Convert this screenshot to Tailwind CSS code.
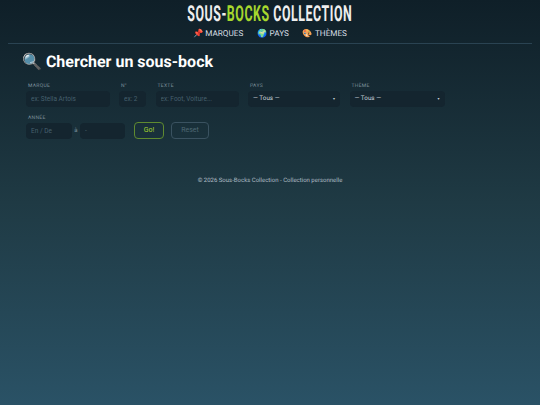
<!DOCTYPE html>
<html lang="fr">
<head>
    <meta charset="UTF-8">
    <title>Sous-Bocks Collection</title>
    <script src="https://cdn.jsdelivr.net/npm/@tailwindcss/browser@4"></script>
</head>
<body class="h-[405px] w-[540px] overflow-hidden bg-gradient-to-b from-[#0f1f28] via-[#1f3a44] to-[#2a5266] font-['Roboto',sans-serif] text-white antialiased [text-rendering:geometricPrecision]">
    <header class="mx-2 h-[44px] border-b border-[#2a4352] text-center">
        <h1 class="flex h-[27px] items-end justify-center text-[22px] leading-[24px] font-bold text-[#eeeeee]">
            <span class="inline-block scale-x-[0.5625] whitespace-nowrap tracking-[1px]">SOUS-<span class="text-[#a6d72e]">BOCKS</span> COLLECTION</span>
        </h1>
        <nav class="flex justify-center gap-[14px] text-[8.2px] leading-[14px] text-[#d5dde2]">
            <a>📌 MARQUES</a>
            <a>🌍 PAYS</a>
            <a>🎨 THÈMES</a>
        </nav>
    </header>

    <main class="px-[22px] pt-[8px]">
        <h2 class="text-[16px] leading-[20px] font-bold">🔍 Chercher un sous-bock</h2>

        <form class="mt-[10px] pl-[4px]">
            <div class="flex gap-[9.5px]">
                <div>
                    <label class="block pl-[2px] text-[5px] leading-[8px] tracking-[0.3px] text-[#7d909b]">MARQUE</label>
                    <input class="mt-[1px] block h-[16px] w-[83.5px] rounded-[4px] bg-[#14252f] px-[5px] text-[6.5px] placeholder:text-[#46606e]" placeholder="ex: Stella Artois">
                </div>
                <div>
                    <label class="block pl-[2px] text-[5px] leading-[8px] tracking-[0.3px] text-[#7d909b]">N°</label>
                    <input class="mt-[1px] block h-[16px] w-[27px] rounded-[4px] bg-[#14252f] px-[5px] text-[6.5px] placeholder:text-[#46606e]" placeholder="ex: 2">
                </div>
                <div>
                    <label class="block pl-[2px] text-[5px] leading-[8px] tracking-[0.3px] text-[#7d909b]">TEXTE</label>
                    <input class="mt-[1px] block h-[16px] w-[83px] rounded-[4px] bg-[#14252f] px-[5px] text-[6.5px] placeholder:text-[#46606e]" placeholder="ex: Foot, Voiture...">
                </div>
                <div>
                    <label class="block pl-[2px] text-[5px] leading-[8px] tracking-[0.3px] text-[#7d909b]">PAYS</label>
                    <div class="mt-[1px] flex h-[16px] w-[92px] items-center justify-between rounded-[4px] bg-[#14252f] px-[5px] text-[6.3px] text-[#c5cfd5]">— Tous —<span class="text-[4px]">▾</span></div>
                </div>
                <div>
                    <label class="block pl-[2px] text-[5px] leading-[8px] tracking-[0.3px] text-[#7d909b]">THÈME</label>
                    <div class="mt-[1px] flex h-[16px] w-[95px] items-center justify-between rounded-[4px] bg-[#14252f] px-[5px] text-[6.3px] text-[#c5cfd5]">— Tous —<span class="text-[4px]">▾</span></div>
                </div>
            </div>

            <div class="mt-[7px]">
                <label class="block pl-[2px] text-[5px] leading-[8px] tracking-[0.3px] text-[#7d909b]">ANNÉE</label>
                <div class="flex items-center">
                    <input class="block h-[16px] w-[46px] rounded-[4px] bg-[#14252f] px-[5px] text-[6.5px] placeholder:text-[#46606e]" placeholder="En / De">
                    <span class="w-[8px] text-center text-[6px] text-[#7d909b]">à</span>
                    <input class="block h-[16px] w-[45px] rounded-[4px] bg-[#14252f] px-[5px] text-[6.5px] placeholder:text-[#46606e]" placeholder="-">
                    <button type="button" class="ml-[9px] h-[17px] w-[30px] rounded-[4px] border border-[#5f8a30] text-[7px] text-[#a6d72e]">Go!</button>
                    <button type="button" class="ml-[7px] h-[17px] w-[38px] rounded-[4px] border border-[#3a5260] text-[7px] text-[#4f6874]">Reset</button>
                </div>
            </div>
        </form>
    </main>

    <footer class="mt-[37px] text-center text-[6px] leading-[9px] text-[#aebbc4]">© 2026 Sous-Bocks Collection - Collection personnelle</footer>
</body>
</html>
